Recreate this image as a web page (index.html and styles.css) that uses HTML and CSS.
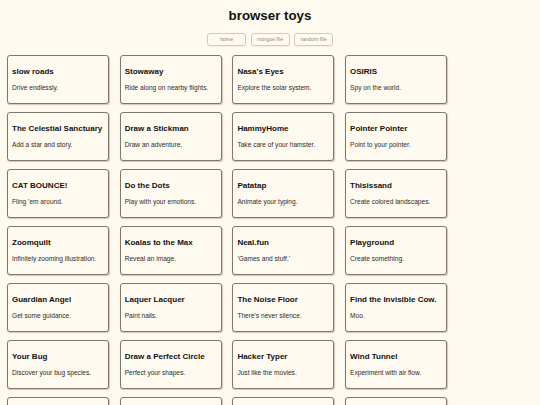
FILE: index.html
```html
<!DOCTYPE html>
<html>
<head>
<meta charset="utf-8">
<link rel="stylesheet" href="styles.css">
</head>
<body>
<header class="top">
  <h1 class="title">browser toys</h1>
  <nav class="nav">
    <a class="btn">home</a>
    <a class="btn">morgue file</a>
    <a class="btn">random file</a>
  </nav>
</header>
<main class="grid">
  <div class="card"><div class="name">slow roads</div><div class="desc">Drive endlessly.</div></div>
  <div class="card"><div class="name">Stowaway</div><div class="desc">Ride along on nearby flights.</div></div>
  <div class="card"><div class="name">Nasa's Eyes</div><div class="desc">Explore the solar system.</div></div>
  <div class="card"><div class="name">OSIRIS</div><div class="desc">Spy on the world.</div></div>

  <div class="card"><div class="name">The Celestial Sanctuary</div><div class="desc">Add a star and story.</div></div>
  <div class="card"><div class="name">Draw a Stickman</div><div class="desc">Draw an adventure.</div></div>
  <div class="card"><div class="name">HammyHome</div><div class="desc">Take care of your hamster.</div></div>
  <div class="card"><div class="name">Pointer Pointer</div><div class="desc">Point to your pointer.</div></div>

  <div class="card"><div class="name">CAT BOUNCE!</div><div class="desc">Fling 'em around.</div></div>
  <div class="card"><div class="name">Do the Dots</div><div class="desc">Play with your emotions.</div></div>
  <div class="card"><div class="name">Patatap</div><div class="desc">Animate your typing.</div></div>
  <div class="card"><div class="name">Thisissand</div><div class="desc">Create colored landscapes.</div></div>

  <div class="card"><div class="name">Zoomquilt</div><div class="desc">Infinitely zooming illustration.</div></div>
  <div class="card"><div class="name">Koalas to the Max</div><div class="desc">Reveal an image.</div></div>
  <div class="card"><div class="name">Neal.fun</div><div class="desc">'Games and stuff.'</div></div>
  <div class="card"><div class="name">Playground</div><div class="desc">Create something.</div></div>

  <div class="card"><div class="name">Guardian Angel</div><div class="desc">Get some guidance.</div></div>
  <div class="card"><div class="name">Laquer Lacquer</div><div class="desc">Paint nails.</div></div>
  <div class="card"><div class="name">The Noise Floor</div><div class="desc">There's never silence.</div></div>
  <div class="card"><div class="name">Find the Invisible Cow.</div><div class="desc">Moo.</div></div>

  <div class="card"><div class="name">Your Bug</div><div class="desc">Discover your bug species.</div></div>
  <div class="card"><div class="name">Draw a Perfect Circle</div><div class="desc">Perfect your shapes.</div></div>
  <div class="card"><div class="name">Hacker Typer</div><div class="desc">Just like the movies.</div></div>
  <div class="card"><div class="name">Wind Tunnel</div><div class="desc">Experiment with air flow.</div></div>

  <div class="card"></div>
  <div class="card"></div>
  <div class="card"></div>
  <div class="card"></div>
</main>
</body>
</html>
```
FILE: styles.css
```css
html, body {
  margin: 0;
  padding: 0;
  background: #fffaf0;
  font-family: "Liberation Sans", Arial, sans-serif;
  color: #111;
}

.top {
  display: flex;
  flex-direction: column;
  align-items: center;
  padding-top: 8px;
}

.title {
  margin: 0;
  font-size: 13.3px;
  line-height: 16px;
  font-weight: bold;
  color: #111;
}

.nav {
  display: flex;
  gap: 4.5px;
  margin-top: 9px;
}

.btn {
  box-sizing: border-box;
  width: 39px;
  height: 12.5px;
  border: 1px solid #cfcbc2;
  border-radius: 3px;
  font-size: 5.3px;
  line-height: 10.5px;
  text-align: center;
  color: #8d8a84;
  box-shadow: 0 0.5px 0.5px rgba(0,0,0,0.08);
}

.grid {
  display: grid;
  grid-template-columns: repeat(4, 102px);
  column-gap: 10.7px;
  row-gap: 8px;
  padding: 9px 0 0 7px;
}

.card {
  box-sizing: border-box;
  height: 49px;
  padding: 11px 4px 0 4px;
  border: 1px solid #7e796f;
  border-radius: 3px;
  background: #fffaf0;
  box-shadow: 0.5px 1px 1px rgba(60,50,30,0.25);
}

.name {
  font-size: 8px;
  line-height: 10px;
  font-weight: bold;
  color: #111;
  white-space: nowrap;
}

.desc {
  margin-top: 7px;
  font-size: 6.6px;
  line-height: 8px;
  color: #2b2b2b;
  white-space: nowrap;
}
```
